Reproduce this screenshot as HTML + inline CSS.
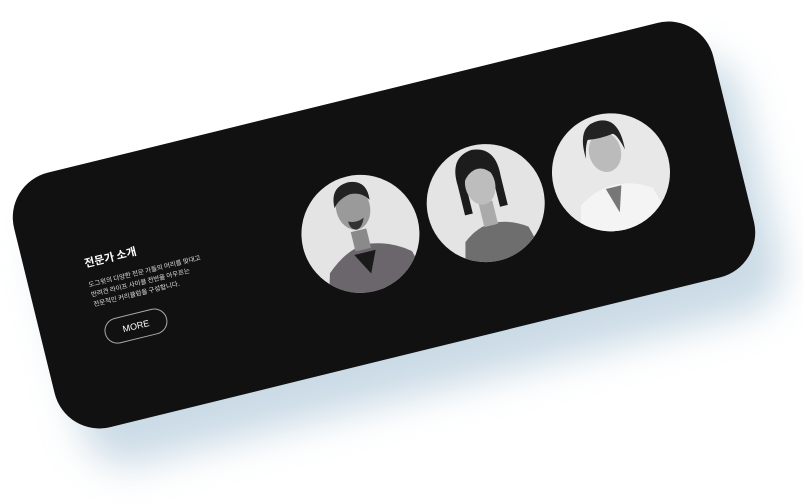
<!DOCTYPE html>
<html><head><meta charset="utf-8"><style>
html,body{margin:0;padding:0;width:803px;height:504px;background:#fff;overflow:hidden;font-family:"Liberation Sans","Noto Sans CJK KR",sans-serif}
.card{position:absolute;left:24px;top:94px;width:720px;height:262px;background:#111;border-radius:46px;transform:rotate(-13.8deg);box-shadow:18px 42px 38px rgba(140,175,200,0.45)}
.t{position:absolute;left:60px;top:89px;color:#fff;font-size:11px;font-weight:bold;font-family:"Noto Sans CJK KR",sans-serif}
.p{position:absolute;left:59px;top:113px;color:#ddd;font-size:6.5px;line-height:10px;font-family:"Noto Sans CJK KR",sans-serif;white-space:nowrap}
.btn{position:absolute;left:63px;top:157px;width:62px;height:24px;border:1px solid #aaa;border-radius:13px;color:#fff;font-size:9px;text-align:center;line-height:24px}
.c{position:absolute;top:75px;width:118px;height:130px}
</style></head><body>
<div class="card">
<div class="t">전문가 소개</div>
<div class="p">도그윗의 다양한 전문 가들의 머리를 맞대고<br>반려견 라이프 사이클 전반을 아우르는<br>전문적인 커리큘럼을 구성합니다.</div>
<div class="btn">MORE</div>

<svg class="c" style="left:276px" viewBox="0 0 118 130" overflow="visible">
<defs><clipPath id="k1"><circle cx="59" cy="59" r="59"/></clipPath></defs>
<circle cx="59" cy="59" r="59" fill="#e4e4e4"/>
<g clip-path="url(#k1)">
<path d="M10 125 L20 90 Q40 72 60 70 Q85 72 105 88 L115 125Z" fill="#6a666b"/>
<path d="M48 78 L60 100 L70 78Z" fill="#1a1a1a"/>
<rect x="50" y="55" width="16" height="20" fill="#8a8a8a"/>
</g>
<ellipse cx="58" cy="32" rx="17" ry="22" fill="#9a9a9a"/>
<path d="M40 28 Q40 6 60 6 Q78 8 76 28 Q70 18 58 18 Q46 20 40 28Z" fill="#222"/>
<path d="M50 44 Q58 48 66 44 Q62 54 56 54 Q50 52 50 44Z" fill="#333"/>
</svg>

<svg class="c" style="left:405px" viewBox="0 0 118 130" overflow="visible">
<defs><clipPath id="k2"><circle cx="59" cy="59" r="59"/></clipPath></defs>
<circle cx="59" cy="59" r="59" fill="#e4e4e4"/>
<g clip-path="url(#k2)">
<path d="M22 125 L30 92 Q45 80 60 80 Q78 80 95 92 L104 125Z" fill="#6e6e6e"/>
<rect x="52" y="58" width="14" height="24" fill="#aaa"/>
</g>
<path d="M36 36 Q34 6 58 4 Q82 6 80 36 L80 66 L72 66 L72 38 L44 38 L44 66 L36 66Z" fill="#1c1c1c"/>
<ellipse cx="58" cy="40" rx="15" ry="20" fill="#bdbdbd"/>
<path d="M43 34 Q46 16 60 16 Q72 18 74 34 Q66 22 56 24 Q48 26 43 34Z" fill="#1c1c1c"/>
</svg>

<svg class="c" style="left:534px" viewBox="0 0 118 130" overflow="visible">
<defs><clipPath id="k3"><circle cx="59" cy="59" r="59"/></clipPath></defs>
<circle cx="59" cy="59" r="59" fill="#e8e8e8"/>
<g clip-path="url(#k3)">
<path d="M12 125 L22 84 Q40 72 58 72 Q78 72 96 84 L108 125Z" fill="#f4f4f4"/>
<path d="M50 74 L58 100 L66 74Z" fill="#777"/>
</g>
<ellipse cx="58" cy="38" rx="16" ry="20" fill="#bbb"/>
<path d="M38 40 Q36 6 58 6 Q80 6 78 40 Q74 24 70 22 Q56 24 44 22 Q40 28 38 40Z" fill="#222"/>
</svg>
</div>
</body></html>
